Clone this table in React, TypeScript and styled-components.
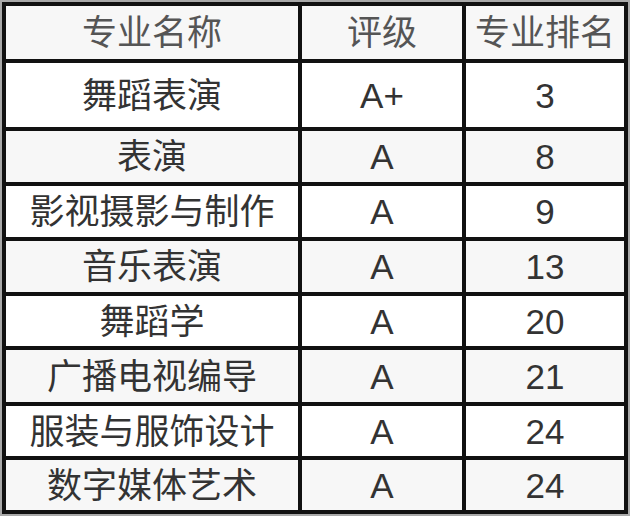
import React from "react";
import styled, { createGlobalStyle } from "styled-components";

const GlobalStyle = createGlobalStyle`
  html, body {
    margin: 0;
    padding: 0;
    background: #ffffff;
  }
  body {
    font-family: "Liberation Sans", "Noto Sans CJK SC", sans-serif;
  }
`;

const Frame = styled.div`
  display: inline-block;
  border: 2px solid #a9a9a9;
  background: #111111;
`;

const Table = styled.div`
  display: grid;
  grid-template-columns: 292px 160px 158px;
  grid-template-rows: 53px 64px 51px 51px 51px 50px 52px 50px 50px;
  gap: 4px;
  padding: 4px;
  background: #111111;
`;

const Cell = styled.div<{ $shaded: boolean; $header?: boolean }>`
  display: flex;
  align-items: center;
  justify-content: center;
  background: ${(p) => (p.$shaded ? "#f7f7f7" : "#ffffff")};
  color: ${(p) => (p.$header ? "#555555" : "#333333")};
  font-family: "Liberation Sans", "Noto Sans CJK SC", sans-serif;
  font-size: 35px;
  line-height: 1;
  white-space: nowrap;
`;

const header = ["专业名称", "评级", "专业排名"];

const rows: [string, string, string][] = [
  ["舞蹈表演", "A+", "3"],
  ["表演", "A", "8"],
  ["影视摄影与制作", "A", "9"],
  ["音乐表演", "A", "13"],
  ["舞蹈学", "A", "20"],
  ["广播电视编导", "A", "21"],
  ["服装与服饰设计", "A", "24"],
  ["数字媒体艺术", "A", "24"],
];

export default function App() {
  return (
    <>
      <GlobalStyle />
      <Frame>
        <Table>
          {header.map((h) => (
            <Cell key={h} $shaded $header>
              {h}
            </Cell>
          ))}
          {rows.map((r, i) =>
            r.map((c, j) => (
              <Cell key={`${i}-${j}`} $shaded={i % 2 === 1}>
                {c}
              </Cell>
            ))
          )}
        </Table>
      </Frame>
    </>
  );
}
